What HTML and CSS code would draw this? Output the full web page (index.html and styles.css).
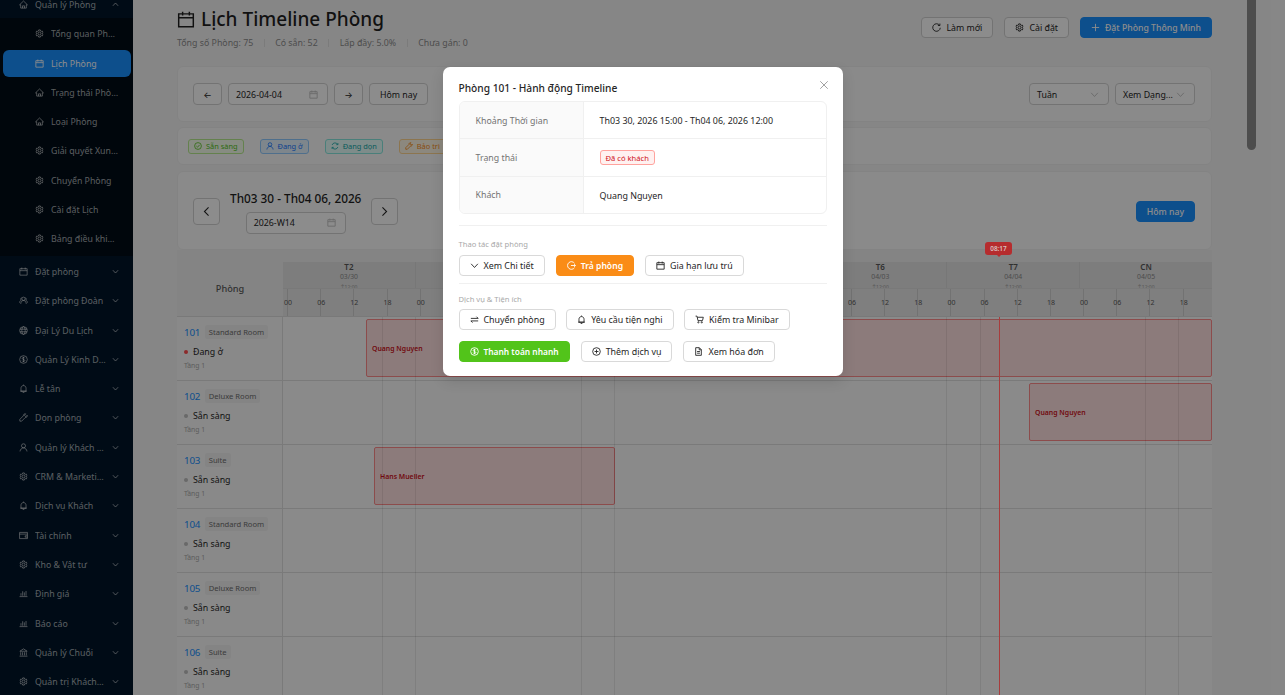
FILE: index.html
```html
<!DOCTYPE html>
<html lang="vi">
<head>
<meta charset="utf-8">
<title>Lịch Timeline Phòng</title>
<link rel="stylesheet" href="styles.css">
</head>
<body>
<svg class="defs" width="0" height="0" aria-hidden="true">
  <symbol id="i-gear" viewBox="0 0 16 16"><path d="M6.6 1.6h2.8l.4 1.9 1.3.7 1.8-.6 1.4 2.4-1.4 1.3v1.4l1.4 1.3-1.4 2.4-1.8-.6-1.3.7-.4 1.9H6.6l-.4-1.9-1.3-.7-1.8.6-1.4-2.4 1.4-1.3V7.3L1.7 6l1.4-2.4 1.8.6 1.3-.7z"/><circle cx="8" cy="8" r="2.6"/></symbol>
  <symbol id="i-cal" viewBox="0 0 16 16"><path d="M1.5 3h13v11.5h-13zM1.5 6.5h13M5 1v3.5M11 1v3.5"/></symbol>
  <symbol id="i-home" viewBox="0 0 16 16"><path d="M8 1.8 1 8.6h2v5.8h10V8.6h2zM6.2 14.4v-4h3.6v4"/></symbol>
  <symbol id="i-down" viewBox="0 0 16 16"><path d="M2 5l6 6.5L14 5"/></symbol>
  <symbol id="i-up" viewBox="0 0 16 16"><path d="M2 11l6-6.5L14 11"/></symbol>
  <symbol id="i-left" viewBox="0 0 16 16"><path d="M11 2 5 8l6 6"/></symbol>
  <symbol id="i-right" viewBox="0 0 16 16"><path d="M5 2l6 6-6 6"/></symbol>
  <symbol id="i-team" viewBox="0 0 16 16"><circle cx="8" cy="5" r="3"/><path d="M3 14c.5-4 2.5-6 5-6s4.500 2 5 6M4.800 3C3 3.500 2.500 6 3.800 7.300 2 8.500 1.200 10 1 12M11.200 3c1.800.5 2.300 3 1 4.300 1.800 1.200 2.600 2.700 2.800 4.700"/></symbol>
  <symbol id="i-globe" viewBox="0 0 16 16"><circle cx="8" cy="8" r="6.800"/><ellipse cx="8" cy="8" rx="3" ry="6.800"/><path d="M1.500 5.700h13M1.500 10.300h13"/></symbol>
  <symbol id="i-dollar" viewBox="0 0 16 16"><circle cx="8" cy="8" r="6.800"/><path d="M10.300 5.800C10 4.800 9 4.500 8 4.500c-1.300 0-2.300.6-2.300 1.700C5.700 8.600 10.400 7.400 10.400 9.800c0 1.100-1 1.700-2.400 1.700-1.200 0-2.200-.5-2.500-1.500M8 3.300v9.400"/></symbol>
  <symbol id="i-bell" viewBox="0 0 16 16"><path d="M8 1v1.500M3.500 12.800V7.500C3.500 4.800 5.500 2.800 8 2.800s4.500 2 4.500 4.700v5.300zM2 12.800h12M6.500 15h3"/></symbol>
  <symbol id="i-tool" viewBox="0 0 16 16"><path d="M14.500 4 12 6.500 9.500 4 12 1.500C9.800.8 7.500 2.500 7.800 5L1.500 11.300v3.200h3.200L11 8.200c2.500.3 4.200-2 3.500-4.200z"/></symbol>
  <symbol id="i-user" viewBox="0 0 16 16"><circle cx="8" cy="5" r="3.600"/><path d="M1.800 15c.3-3.500 3-6.300 6.200-6.300s5.900 2.800 6.200 6.300"/></symbol>
  <symbol id="i-wallet" viewBox="0 0 16 16"><path d="M1 2.500h14v11H1zM1 5.500h14M15 8.500h-4v2.500h4"/></symbol>
  <symbol id="i-bar" viewBox="0 0 16 16"><path d="M1 13.500h14M3.500 12V7.500M6.500 12V4M9.500 12V6M12.500 12V3.500"/></symbol>
  <symbol id="i-bank" viewBox="0 0 16 16"><path d="M1.500 5.800 8 1.500l6.500 4.300zM3 7.500v5.500M6.300 7.500v5.500M9.700 7.500v5.500M13 7.500v5.500M1 14.500h14"/></symbol>
  <symbol id="i-reload" viewBox="0 0 16 16"><path d="M13.500 4.200A6.700 6.700 0 1 0 14.700 8.500M14 1v3.500h-3.500"/></symbol>
  <symbol id="i-plus" viewBox="0 0 16 16"><path d="M8 1.500v13M1.500 8h13"/></symbol>
  <symbol id="i-check" viewBox="0 0 16 16"><circle cx="8" cy="8" r="6.800"/><path d="M4.800 8.200 7 10.400l4.200-4.600"/></symbol>
  <symbol id="i-sync" viewBox="0 0 16 16"><path d="M2.200 6A6.200 6.200 0 0 1 13.500 5M13.800 10A6.200 6.200 0 0 1 2.500 11M13.800 2v3.300h-3.300M2.200 14v-3.300h3.300"/></symbol>
  <symbol id="i-close" viewBox="0 0 16 16"><path d="M2 2l12 12M14 2 2 14"/></symbol>
  <symbol id="i-out" viewBox="0 0 16 16"><path d="M13.300 4A6.800 6.800 0 1 0 13.300 12M7 8h8M12.500 5.700 15 8l-2.500 2.300"/></symbol>
  <symbol id="i-swap" viewBox="0 0 16 16"><path d="M1.500 6h13L11.500 3M14.500 10.500h-13l3 3"/></symbol>
  <symbol id="i-cart" viewBox="0 0 16 16"><path d="M1 2h2.500l1.800 8h8l1.500-6H4"/><circle cx="6" cy="13" r="1.100"/><circle cx="12" cy="13" r="1.100"/></symbol>
  <symbol id="i-pluscircle" viewBox="0 0 16 16"><circle cx="8" cy="8" r="6.800"/><path d="M8 4.500v7M4.500 8h7"/></symbol>
  <symbol id="i-file" viewBox="0 0 16 16"><path d="M3 1.200h6.500L13 4.700v10.100H3zM9.300 1.500v3.500H13M5.500 8h5M5.500 11h5"/></symbol>
</svg>

<div class="app">
  <aside class="sidebar">
    <nav class="menu">
      <div class="item top first"><svg class="ic"><use href="#i-home"/></svg><span class="lbl">Quản lý Phòng</span><svg class="chev"><use href="#i-up"/></svg></div>
      <div class="submenu">
        <div class="item sub"><svg class="ic"><use href="#i-gear"/></svg><span class="lbl">Tổng quan Phòng</span></div>
        <div class="item sub active"><svg class="ic"><use href="#i-cal"/></svg><span class="lbl">Lịch Phòng</span></div>
        <div class="item sub"><svg class="ic"><use href="#i-home"/></svg><span class="lbl">Trạng thái Phòng</span></div>
        <div class="item sub"><svg class="ic"><use href="#i-home"/></svg><span class="lbl">Loại Phòng</span></div>
        <div class="item sub"><svg class="ic"><use href="#i-gear"/></svg><span class="lbl">Giải quyết Xung đột</span></div>
        <div class="item sub"><svg class="ic"><use href="#i-gear"/></svg><span class="lbl">Chuyển Phòng</span></div>
        <div class="item sub"><svg class="ic"><use href="#i-gear"/></svg><span class="lbl">Cài đặt Lịch</span></div>
        <div class="item sub"><svg class="ic"><use href="#i-gear"/></svg><span class="lbl">Bảng điều khiển Phòng</span></div>
      </div>
      <div class="item top"><svg class="ic"><use href="#i-cal"/></svg><span class="lbl">Đặt phòng</span><svg class="chev"><use href="#i-down"/></svg></div>
      <div class="item top"><svg class="ic"><use href="#i-team"/></svg><span class="lbl">Đặt phòng Đoàn</span><svg class="chev"><use href="#i-down"/></svg></div>
      <div class="item top"><svg class="ic"><use href="#i-globe"/></svg><span class="lbl">Đại Lý Du Lịch</span><svg class="chev"><use href="#i-down"/></svg></div>
      <div class="item top"><svg class="ic"><use href="#i-dollar"/></svg><span class="lbl">Quản Lý Kinh Doanh</span><svg class="chev"><use href="#i-down"/></svg></div>
      <div class="item top"><svg class="ic"><use href="#i-bell"/></svg><span class="lbl">Lễ tân</span><svg class="chev"><use href="#i-down"/></svg></div>
      <div class="item top"><svg class="ic"><use href="#i-tool"/></svg><span class="lbl">Dọn phòng</span><svg class="chev"><use href="#i-down"/></svg></div>
      <div class="item top"><svg class="ic"><use href="#i-user"/></svg><span class="lbl">Quản lý Khách hàng</span><svg class="chev"><use href="#i-down"/></svg></div>
      <div class="item top"><svg class="ic"><use href="#i-gear"/></svg><span class="lbl">CRM &amp; Marketing</span><svg class="chev"><use href="#i-down"/></svg></div>
      <div class="item top"><svg class="ic"><use href="#i-bell"/></svg><span class="lbl">Dịch vụ Khách</span><svg class="chev"><use href="#i-down"/></svg></div>
      <div class="item top"><svg class="ic"><use href="#i-wallet"/></svg><span class="lbl">Tài chính</span><svg class="chev"><use href="#i-down"/></svg></div>
      <div class="item top"><svg class="ic"><use href="#i-gear"/></svg><span class="lbl">Kho &amp; Vật tư</span><svg class="chev"><use href="#i-down"/></svg></div>
      <div class="item top"><svg class="ic"><use href="#i-bar"/></svg><span class="lbl">Định giá</span><svg class="chev"><use href="#i-down"/></svg></div>
      <div class="item top"><svg class="ic"><use href="#i-bar"/></svg><span class="lbl">Báo cáo</span><svg class="chev"><use href="#i-down"/></svg></div>
      <div class="item top"><svg class="ic"><use href="#i-bank"/></svg><span class="lbl">Quản lý Chuỗi</span><svg class="chev"><use href="#i-down"/></svg></div>
      <div class="item top"><svg class="ic"><use href="#i-gear"/></svg><span class="lbl">Quản trị Khách sạn</span><svg class="chev"><use href="#i-down"/></svg></div>
    </nav>
  </aside>

  <main class="main">
    <header class="page-head">
      <div class="page-title-block">
        <h1 class="page-title"><svg class="title-ic"><use href="#i-cal"/></svg>Lịch Timeline Phòng</h1>
        <div class="stats"><span>Tổng số Phòng: 75</span><i></i><span>Có sẵn: 52</span><i></i><span>Lấp đầy: 5.0%</span><i></i><span>Chưa gán: 0</span></div>
      </div>
      <div class="head-actions">
        <button class="btn"><svg class="bi"><use href="#i-reload"/></svg>Làm mới</button>
        <button class="btn"><svg class="bi"><use href="#i-gear"/></svg>Cài đặt</button>
        <button class="btn primary"><svg class="bi"><use href="#i-plus"/></svg>Đặt Phòng Thông Minh</button>
      </div>
    </header>

    <section class="card toolbar">
      <div class="tool-group">
        <button class="btn nav-arrow">←</button>
        <div class="input w100"><span>2026-04-04</span><svg class="bi light"><use href="#i-cal"/></svg></div>
        <button class="btn nav-arrow">→</button>
        <button class="btn tall">Hôm nay</button>
      </div>
      <div class="tool-group">
        <div class="input w80"><span>Tuần</span><svg class="bi light"><use href="#i-down"/></svg></div>
        <div class="input w80"><span>Xem Dạng...</span><svg class="bi light"><use href="#i-down"/></svg></div>
      </div>
    </section>

    <section class="card legend">
      <span class="chip green"><svg class="ci"><use href="#i-check"/></svg>Sẵn sàng</span>
      <span class="chip blue"><svg class="ci"><use href="#i-user"/></svg>Đang ở</span>
      <span class="chip cyan"><svg class="ci"><use href="#i-sync"/></svg>Đang dọn</span>
      <span class="chip orange"><svg class="ci"><use href="#i-tool"/></svg>Bảo trì</span>
    </section>

    <section class="card week-nav">
      <div class="week-left">
        <button class="btn square"><svg class="bi big"><use href="#i-left"/></svg></button>
        <div class="week-center">
          <div class="week-title">Th03 30 - Th04 06, 2026</div>
          <div class="input w100 wk"><span>2026-W14</span><svg class="bi light"><use href="#i-cal"/></svg></div>
        </div>
        <button class="btn square"><svg class="bi big"><use href="#i-right"/></svg></button>
      </div>
      <button class="btn primary today">Hôm nay</button>
    </section>

    <section class="timeline">
      <div class="tl-head">
        <div class="tl-corner">Phòng</div>
        <div class="tl-scale">
          <div class="days">
            <div class="day"><b>T2</b><span>03/30</span><small>↕12:00</small></div>
            <div class="day"><b>T3</b><span>03/31</span><small>↕12:00</small></div>
            <div class="day"><b>T4</b><span>04/01</span><small>↕12:00</small></div>
            <div class="day"><b>T5</b><span>04/02</span><small>↕12:00</small></div>
            <div class="day"><b>T6</b><span>04/03</span><small>↕12:00</small></div>
            <div class="day"><b>T7</b><span>04/04</span><small>↕12:00</small></div>
            <div class="day"><b>CN</b><span>04/05</span><small>↕12:00</small></div>
          </div>
          <div class="hours">
            <div class="hr"><span>00</span></div><div class="hr"><span>06</span></div><div class="hr"><span>12</span></div><div class="hr"><span>18</span></div>
            <div class="hr"><span>00</span></div><div class="hr"><span>06</span></div><div class="hr"><span>12</span></div><div class="hr"><span>18</span></div>
            <div class="hr"><span>00</span></div><div class="hr"><span>06</span></div><div class="hr"><span>12</span></div><div class="hr"><span>18</span></div>
            <div class="hr"><span>00</span></div><div class="hr"><span>06</span></div><div class="hr"><span>12</span></div><div class="hr"><span>18</span></div>
            <div class="hr"><span>00</span></div><div class="hr"><span>06</span></div><div class="hr"><span>12</span></div><div class="hr"><span>18</span></div>
            <div class="hr"><span>00</span></div><div class="hr"><span>06</span></div><div class="hr"><span>12</span></div><div class="hr"><span>18</span></div>
            <div class="hr"><span>00</span></div><div class="hr"><span>06</span></div><div class="hr"><span>12</span></div><div class="hr"><span>18</span></div>
          </div>
        </div>
      </div>

      <div class="rows">
        <i class="vline" style="left:205px"></i><i class="vline" style="left:238px"></i>
        <i class="vline" style="left:404px"></i><i class="vline" style="left:437px"></i>
        <i class="vline" style="left:769px"></i><i class="vline" style="left:803px"></i>
        <i class="vline" style="left:968px"></i><i class="vline" style="left:1001px"></i>

        <div class="room-row">
          <div class="room-info">
            <div class="room-top"><a class="room-no">101</a><span class="room-type">Standard Room</span></div>
            <div class="room-status"><i class="dot red"></i>Đang ở</div>
            <div class="room-floor">Tầng 1</div>
          </div>
          <div class="track"><div class="bar" style="left:83px;width:846px">Quang Nguyen</div></div>
        </div>
        <div class="room-row">
          <div class="room-info">
            <div class="room-top"><a class="room-no">102</a><span class="room-type">Deluxe Room</span></div>
            <div class="room-status"><i class="dot"></i>Sẵn sàng</div>
            <div class="room-floor">Tầng 1</div>
          </div>
          <div class="track"><div class="bar" style="left:746px;width:183px">Quang Nguyen</div></div>
        </div>
        <div class="room-row">
          <div class="room-info">
            <div class="room-top"><a class="room-no">103</a><span class="room-type">Suite</span></div>
            <div class="room-status"><i class="dot"></i>Sẵn sàng</div>
            <div class="room-floor">Tầng 1</div>
          </div>
          <div class="track"><div class="bar" style="left:91px;width:241px">Hans Mueller</div></div>
        </div>
        <div class="room-row">
          <div class="room-info">
            <div class="room-top"><a class="room-no">104</a><span class="room-type">Standard Room</span></div>
            <div class="room-status"><i class="dot"></i>Sẵn sàng</div>
            <div class="room-floor">Tầng 1</div>
          </div>
          <div class="track"></div>
        </div>
        <div class="room-row">
          <div class="room-info">
            <div class="room-top"><a class="room-no">105</a><span class="room-type">Deluxe Room</span></div>
            <div class="room-status"><i class="dot"></i>Sẵn sàng</div>
            <div class="room-floor">Tầng 1</div>
          </div>
          <div class="track"></div>
        </div>
        <div class="room-row">
          <div class="room-info">
            <div class="room-top"><a class="room-no">106</a><span class="room-type">Suite</span></div>
            <div class="room-status"><i class="dot"></i>Sẵn sàng</div>
            <div class="room-floor">Tầng 1</div>
          </div>
          <div class="track"></div>
        </div>
      </div>

      <div class="now-tag">08:17</div>
      <div class="now-line"></div>
    </section>
  </main>
</div>

<div class="scrollbar"></div>

<div class="overlay">
  <div class="modal">
    <div class="modal-head"><span class="modal-title">Phòng 101 - Hành động Timeline</span><svg class="modal-close"><use href="#i-close"/></svg></div>
    <div class="desc">
      <div class="desc-row"><div class="desc-k">Khoảng Thời gian</div><div class="desc-v">Th03 30, 2026 15:00 - Th04 06, 2026 12:00</div></div>
      <div class="desc-row"><div class="desc-k">Trạng thái</div><div class="desc-v"><span class="tag-red">Đã có khách</span></div></div>
      <div class="desc-row"><div class="desc-k">Khách</div><div class="desc-v">Quang Nguyen</div></div>
    </div>
    <div class="divider first-div"></div>
    <div class="sec-label">Thao tác đặt phòng</div>
    <div class="btn-row">
      <button class="mbtn"><svg class="mi"><use href="#i-down"/></svg>Xem Chi tiết</button>
      <button class="mbtn orange-btn"><svg class="mi"><use href="#i-out"/></svg>Trả phòng</button>
      <button class="mbtn"><svg class="mi"><use href="#i-cal"/></svg>Gia hạn lưu trú</button>
    </div>
    <div class="divider second-div"></div>
    <div class="sec-label second-label">Dịch vụ &amp; Tiện ích</div>
    <div class="btn-row tight">
      <button class="mbtn"><svg class="mi"><use href="#i-swap"/></svg>Chuyển phòng</button>
      <button class="mbtn"><svg class="mi"><use href="#i-bell"/></svg>Yêu cầu tiện nghi</button>
      <button class="mbtn"><svg class="mi"><use href="#i-cart"/></svg>Kiểm tra Minibar</button>
    </div>
    <div class="btn-row last">
      <button class="mbtn green-btn"><svg class="mi"><use href="#i-dollar"/></svg>Thanh toán nhanh</button>
      <button class="mbtn"><svg class="mi"><use href="#i-pluscircle"/></svg>Thêm dịch vụ</button>
      <button class="mbtn"><svg class="mi"><use href="#i-file"/></svg>Xem hóa đơn</button>
    </div>
  </div>
</div>
</body>
</html>
```
FILE: styles.css
```css
* { box-sizing: border-box; }
html, body { margin: 0; height: 100%; overflow: hidden; }
body { font-family: "Noto Sans", Inter, sans-serif; font-size: 10px; color: #262626; background: #f5f5f5; position: relative; }
.defs { position: absolute; }
svg { fill: none; stroke: currentColor; stroke-width: 1.6; flex: none; }
button { font-family: inherit; }

.app { display: flex; height: 695px; overflow: hidden; }

/* Sidebar */
.sidebar { width: 133px; flex: none; background: #001529; overflow: hidden; }
.menu { margin-top: -9px; }
.item { display: flex; align-items: center; height: 27px; margin: 0 2px 2.3px 3px; border-radius: 6px; color: rgba(255,255,255,.65); font-size: 8.8px; white-space: nowrap; }
.item .lbl { overflow: hidden; text-overflow: ellipsis; padding-top: 1px; }
.item.top { padding-left: 16px; }
.item.top .ic { margin-right: 7px; }
.item.top .lbl { width: 71px; }
.item.sub { padding-left: 32px; }
.item.sub .ic { margin-right: 7px; }
.item.sub .lbl { width: 67.500px; }
.item.active { background: #1890ff; color: #fff; }
.ic { width: 9px; height: 9px; stroke-width: 1.5; }
.chev { width: 7px; height: 7px; margin-left: auto; margin-right: 12px; stroke-width: 2; }
.submenu { background: #000c17; margin: -2.3px 0 2.3px; padding: 2.3px 0 1px; }

/* Main */
.main { flex: 1; min-width: 0; padding: 0 73px 0 44px; overflow: hidden; position: relative; }
.page-head { height: 66px; display: flex; justify-content: space-between; align-items: flex-start; }
.page-title { margin: 6px 0 0; display: flex; align-items: center; gap: 6px; font-size: 19px; line-height: 26px; font-weight: 500; color: #1f1f1f; }
.title-ic { width: 18px; height: 19px; stroke-width: 1.3; }
.stats { margin-top: 5px; display: flex; align-items: center; gap: 10.500px; font-size: 8.8px; line-height: 12px; color: #8c8c8c; }
.stats i { width: 1px; height: 8px; background: #e0e0e0; }
.head-actions { display: flex; gap: 11px; margin-top: 17px; }

.btn { height: 21px; display: inline-flex; align-items: center; justify-content: center; gap: 5px; padding: 0 10px; background: #fff; border: 1px solid #d2d2d2; border-radius: 4px; font-size: 8.8px; color: #262626; white-space: nowrap; }
.btn.tall { height: 22px; padding-top: 1px; }
.btn.primary { background: #1890ff; border-color: #1890ff; color: #fff; font-weight: 500; font-size: 8.7px; }
.btn.today { margin-top: 2px; }
.bi { width: 9px; height: 9px; }
.bi.light { color: #bfbfbf; }
.bi.big { width: 11px; height: 11px; }
.btn.nav-arrow { width: 29px; height: 22px; padding: 0; font-size: 9px; }
.btn.square { width: 27px; height: 27px; padding: 0; margin-top: 2px; }

.card { background: #fcfcfc; border: 1px solid #efefef; border-radius: 6px; }
.toolbar { height: 56px; margin-bottom: 5px; display: flex; align-items: center; justify-content: space-between; padding: 0 16px 0 15px; }
.tool-group { display: flex; gap: 6px; align-items: center; }
.input { height: 22px; display: flex; align-items: center; justify-content: space-between; padding: 0 9px 0 7px; background: #fff; border: 1px solid #d2d2d2; border-radius: 4px; font-size: 8.8px; color: #262626; white-space: nowrap; }
.input span { padding-top: 1px; }
.w100 { width: 100px; }
.w80 { width: 80px; }

.legend { height: 38px; margin-bottom: 6px; display: flex; align-items: center; gap: 16px; padding: 0 10px; }
.chip { height: 15px; display: inline-flex; align-items: center; gap: 4px; padding: 0 5px; border: 1px solid; border-radius: 3px; font-size: 7.4px; white-space: nowrap; }
.ci { width: 8px; height: 8px; }
.chip.green { background: #f6ffed; border-color: #b7eb8f; color: #52c41a; }
.chip.blue { background: #e6f4ff; border-color: #91caff; color: #1677ff; }
.chip.cyan { background: #e6fffb; border-color: #87e8de; color: #13a8a8; }
.chip.orange { background: #fff7e6; border-color: #ffd591; color: #fa8c16; }

.week-nav { height: 79px; display: flex; align-items: center; justify-content: space-between; padding: 0 16px 0 15px; }
.week-left { display: flex; align-items: center; gap: 10px; }
.week-center { display: flex; flex-direction: column; align-items: center; gap: 6px; margin-top: 2px; }
.week-title { font-size: 11.8px; line-height: 16px; font-weight: 500; color: #1f1f1f; white-space: nowrap; }
.wk { height: 22px; }

/* Timeline */
.timeline { position: relative; }
.tl-head { height: 67px; display: flex; background: #f0f0f0; border-bottom: 1px solid #dcdcdc; }
.tl-corner { width: 106px; flex: none; display: flex; align-items: center; justify-content: center; padding-top: 11px; font-size: 9.2px; font-weight: 500; color: #595959; }
.tl-scale { flex: 1; min-width: 0; padding-top: 12px; overflow: hidden; }
.days { display: flex; height: 26px; background: #e4e4e4; overflow: hidden; }
.day { flex: 1; display: flex; flex-direction: column; align-items: center; border-right: 1px solid #d9d9d9; }
.day:last-child { border-right: 0; }
.day b { font-size: 8px; line-height: 9px; font-weight: 600; color: #595959; }
.day span { font-size: 6.8px; line-height: 11px; color: #8c8c8c; }
.day small { font-size: 5px; line-height: 7px; color: #a0a0a0; margin-top: 2px; }
.hours { display: flex; height: 28px; padding-left: 4px; background: #e8e8e8; border-top: 1px solid #dcdcdc; overflow: hidden; }
.hr { flex: 0 0 33.18px; border-left: 1px solid #cfcfcf; display: flex; align-items: center; }
.hr span { transform: translateX(-50%); font-size: 7px; color: #595959; }

.rows { position: relative; }
.vline { position: absolute; top: 0; height: 400px; width: 1px; background: rgba(0,0,0,.08); z-index: 2; }
.room-row { height: 64px; display: flex; background: #fcfcfc; border-bottom: 1px solid #dedede; }
.room-info { width: 106px; flex: none; padding: 8px 0 0 7px; background: #f9f9f9; border-right: 1px solid #dedede; }
.room-top { display: flex; align-items: center; gap: 4.500px; height: 14px; }
.room-no { font-size: 9.8px; letter-spacing: -.2px; color: #1890ff; font-weight: 400; }
.room-type { height: 14px; display: inline-flex; align-items: center; padding: 0 4px; background: #f0f0f0; border-radius: 3px; font-size: 7.6px; color: #6e6e6e; white-space: nowrap; }
.room-status { display: flex; align-items: center; gap: 5px; margin-top: 7px; height: 12px; font-size: 8.8px; color: #262626; }
.dot { width: 4px; height: 4px; border-radius: 50%; background: #bfbfbf; }
.dot.red { background: #ff4d4f; }
.room-floor { margin-top: 3px; font-size: 6.8px; line-height: 10px; color: #aaa; }
.track { flex: 1; position: relative; }
.bar { position: absolute; top: 2px; height: 58px; display: flex; align-items: center; padding: 0 5px; background: #ffe0e0; border: 1px solid #ff8a8b; border-radius: 2px; font-size: 6.9px; font-weight: 600; color: #cf1322; white-space: nowrap; }

.now-tag { position: absolute; left: 808px; top: -8px; width: 27px; height: 13px; display: flex; align-items: center; justify-content: center; background: #b62c2e; border-radius: 3px; color: #d9c0c0; font-size: 6.4px; font-weight: 600; z-index: 20; }
.now-tag::after { content: ""; position: absolute; left: 11.500px; bottom: -2px; border: 2px solid transparent; border-bottom: 0; border-top-color: #b62c2e; }
.now-line { position: absolute; left: 822px; top: 67px; width: 1px; height: 400px; background: #a83c3c; z-index: 20; }

.scrollbar { position: absolute; left: 1247px; top: 0; width: 9px; height: 150px; border-radius: 0 0 5px 5px; background: #8d8d8d; }

/* Modal */
.overlay { position: absolute; inset: 0; background: rgba(0,0,0,.45); display: flex; justify-content: center; align-items: flex-start; padding-top: 67px; z-index: 10; }
.modal { width: 400px; height: 309px; padding: 13px 16px 0; background: #fff; border-radius: 7px; box-shadow: 0 5px 14px rgba(0,0,0,.12); }
.modal-head { height: 16px; display: flex; justify-content: space-between; align-items: center; }
.modal-title { font-size: 10.2px; font-weight: 500; color: #262626; }
.modal-close { width: 10px; height: 10px; color: #8c8c8c; margin: -6px -2px 0 0; stroke-width: 1.3; }
.desc { margin-top: 5px; height: 113px; border: 1px solid #f0f0f0; border-radius: 6px; overflow: hidden; display: flex; flex-direction: column; }
.desc-row { flex: 1; display: flex; border-bottom: 1px solid #f0f0f0; }
.desc-row:last-child { border-bottom: 0; }
.desc-k { width: 124px; flex: none; display: flex; align-items: center; padding: 1px 0 0 16px; background: #fafafa; border-right: 1px solid #f0f0f0; font-size: 8.8px; color: #737373; }
.desc-v { flex: 1; display: flex; align-items: center; padding: 1px 0 0 16px; font-size: 8.900px; color: #262626; }
.tag-red { height: 15px; display: inline-flex; align-items: center; padding: 0 5px; background: #fff1f0; border: 1px solid #ffa39e; border-radius: 3px; font-size: 7.6px; color: #cf1322; }
.divider { height: 1px; background: #f0f0f0; }
.first-div { margin-top: 11px; }
.second-div { margin-top: 7px; }
.sec-label { margin-top: 13px; height: 10px; line-height: 10px; font-size: 7.6px; color: #a8a8a8; }
.second-label { margin-top: 10px; }
.btn-row { display: flex; gap: 11px; margin-top: 6px; }
.btn-row.tight { margin-top: 5px; gap: 10.500px; }
.btn-row.last { margin-top: 11px; }
.mbtn { height: 21px; display: inline-flex; align-items: center; gap: 5px; padding: 0 10px; background: #fff; border: 1px solid #d9d9d9; border-radius: 4px; font-size: 8.9px; color: #262626; white-space: nowrap; }
.mi { width: 9px; height: 9px; }
.orange-btn { background: #fa8c16; border-color: #fa8c16; color: #fff; font-weight: 600; font-size: 8.6px; }
.green-btn { background: #52c41a; border-color: #52c41a; color: #fff; font-weight: 600; font-size: 8.4px; }
```
